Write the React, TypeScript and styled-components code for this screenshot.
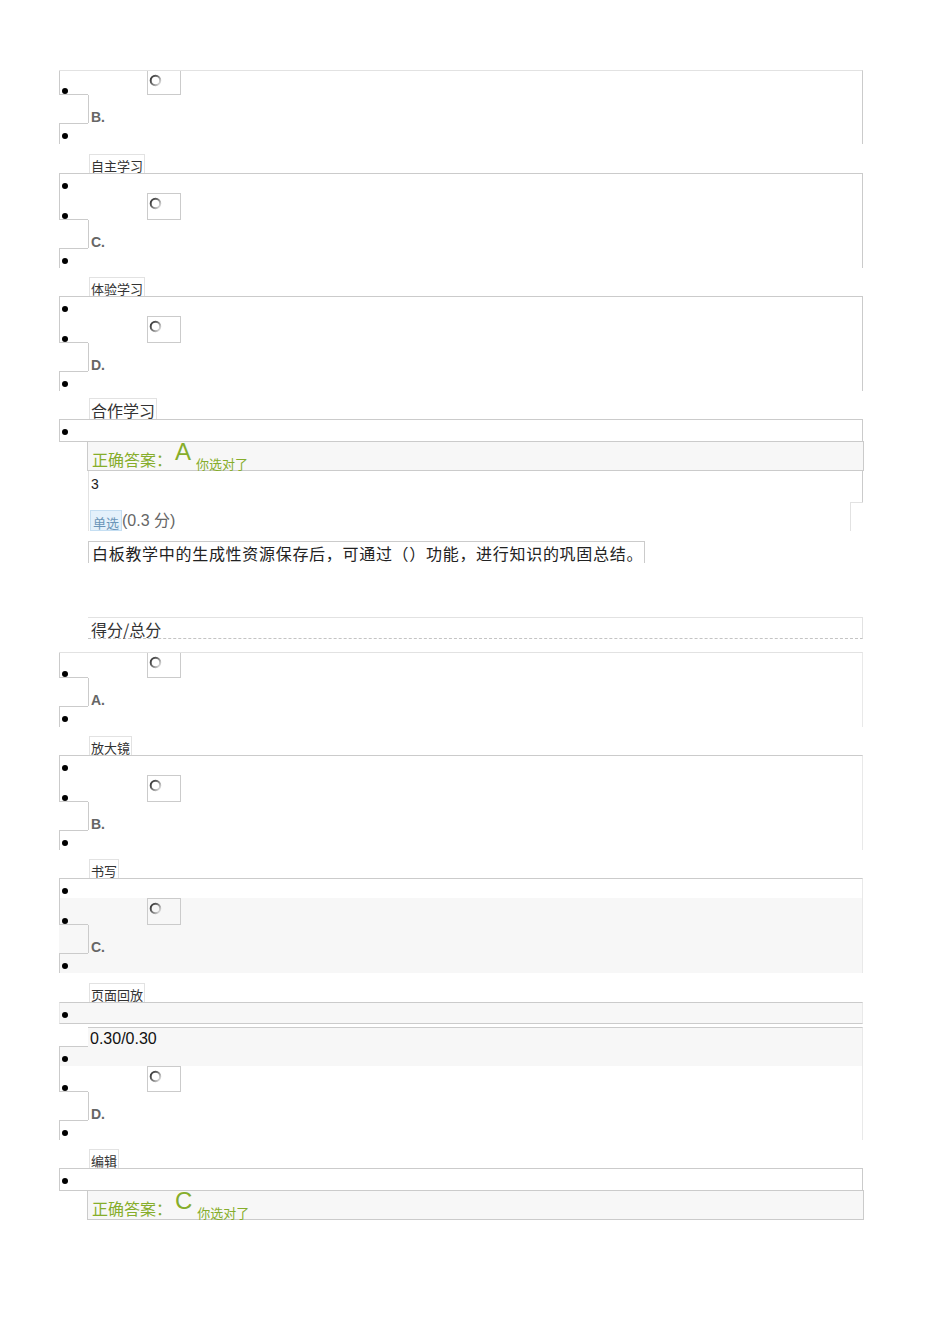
import React, { useId } from 'react';
import styled, { createGlobalStyle } from 'styled-components';

const LINE = '#cbcbcb';
const LIGHT = '#e2e2e2';
const FAINT = '#e9e9e9';
const GRAY = '#f7f7f7';
const GREEN = '#86ad2b';
const CJK = '"Noto Sans CJK SC", "Liberation Sans", sans-serif';
const LATIN = '"Liberation Sans", "Noto Sans CJK SC", sans-serif';

const GlobalStyle = createGlobalStyle`
  html, body { margin: 0; padding: 0; background: #fff; }
  body { font-family: ${LATIN}; color: #333; }
  * { box-sizing: border-box; }
`;

const Page = styled.div`
  width: 950px;
  min-height: 1344px;
  padding: 70px 0 0 59px;
`;

const Sheet = styled.div`
  width: 804px;
  display: flex;
  flex-direction: column;
`;

/* ---------- option block ---------- */

type TopLine = 'light' | 'dark' | 'notch';

const BlockWrap = styled.section<{ $top: TopLine; $side: string }>`
  display: flex;
  flex-direction: column;
  border-top: ${({ $top }) =>
    $top === 'notch' ? 'none' : `1px solid ${$top === 'light' ? LIGHT : LINE}`};
  border-right: 1px solid ${({ $side }) => $side};
`;

const Row = styled.div<{ $h: number; $gray?: boolean }>`
  display: flex;
  height: ${({ $h }) => $h}px;
  background: ${({ $gray }) => ($gray ? GRAY : 'transparent')};
`;

const Notch = styled.div<{ $lineTop?: boolean; $lineBottom?: boolean; $end?: boolean }>`
  width: 29px;
  height: 100%;
  display: flex;
  padding-left: 2px;
  align-items: ${({ $end }) => ($end ? 'flex-end' : 'flex-start')};
  border-left: 1px solid ${LINE};
  border-top: ${({ $lineTop }) => ($lineTop ? `1px solid ${LINE}` : 'none')};
  border-bottom: ${({ $lineBottom }) => ($lineBottom ? `1px solid ${LINE}` : 'none')};
`;

const Dot = styled.span<{ $mt?: number }>`
  display: block;
  width: 6px;
  height: 6px;
  border-radius: 50%;
  background: #000;
  margin-top: ${({ $mt }) => $mt ?? 0}px;
`;

const RadioBox = styled.div<{ $noTop?: boolean }>`
  margin-left: 59px;
  width: 34px;
  height: 100%;
  border: 1px solid ${LINE};
  border-top: ${({ $noTop }) => ($noTop ? 'none' : `1px solid ${LINE}`)};
  padding: 3px 0 0 1px;
  display: flex;
  align-items: flex-start;
`;

const LetterCell = styled.div`
  margin-left: 29px;
  height: 100%;
  border-left: 1px solid ${LINE};
  padding-left: 2px;
  display: flex;
  align-items: flex-end;
  font-family: ${LATIN};
  font-weight: 700;
  font-size: 14px;
  line-height: 14px;
  color: #666;
`;

const LetterText = styled.span`
  margin-bottom: -1px;
`;

function RadioIcon() {
  const id = useId().replace(/:/g, '');
  return (
    <svg width="13" height="13" viewBox="0 0 13 13">
      <defs>
        <linearGradient id={id} x1="0" y1="0.15" x2="1" y2="0.85">
          <stop offset="0" stopColor="#333" />
          <stop offset="0.5" stopColor="#7a7a7a" />
          <stop offset="1" stopColor="#e4e4e4" />
        </linearGradient>
      </defs>
      <circle cx="6.5" cy="6.5" r="4.8" fill="none" stroke={`url(#${id})`} strokeWidth="2" />
    </svg>
  );
}

type BlockProps = {
  letter: string;
  top: TopLine;
  side: string;
  upper?: boolean;
  upperGray?: boolean;
  radioH: number;
  bottomH: number;
  grayBody?: boolean;
};

function OptionBlock({ letter, top, side, upper, upperGray, radioH, bottomH, grayBody }: BlockProps) {
  const notchTop = top === 'notch';
  return (
    <BlockWrap $top={top} $side={side}>
      {upper && (
        <Row $h={notchTop ? 20 : 19} $gray={upperGray}>
          <Notch $lineTop={notchTop}>
            <Dot $mt={9} />
          </Notch>
        </Row>
      )}
      <Row $h={radioH} $gray={grayBody}>
        <Notch $lineBottom $end>
          <Dot />
        </Notch>
        <RadioBox $noTop={!upper}>
          <RadioIcon />
        </RadioBox>
      </Row>
      <Row $h={28} $gray={grayBody}>
        <LetterCell>
          <LetterText>{letter}</LetterText>
        </LetterCell>
      </Row>
      <Row $h={bottomH} $gray={grayBody}>
        <Notch $lineTop>
          <Dot $mt={9} />
        </Notch>
      </Row>
    </BlockWrap>
  );
}

/* ---------- option label ---------- */

const LabelGap = styled.div<{ $h: number }>`
  height: ${({ $h }) => $h}px;
  display: flex;
  align-items: flex-end;
`;

const LabelBox = styled.div<{ $big?: boolean }>`
  margin-left: 30px;
  height: ${({ $big }) => ($big ? 21 : 19)}px;
  padding: 0 1px;
  border: 1px solid ${LIGHT};
  border-bottom: none;
  display: flex;
  align-items: flex-end;
  font-family: ${CJK};
  font-size: ${({ $big }) => ($big ? 16 : 13)}px;
  line-height: ${({ $big }) => ($big ? 17 : 14)}px;
  color: #333;
`;

/* ---------- answer ---------- */

const AnswerLead = styled.div`
  height: 22px;
  border: 1px solid ${LINE};
  border-bottom: none;
  padding-left: 2px;
`;

const AnswerRow = styled.div`
  display: flex;
  margin-right: -1px;
`;

const AnswerStub = styled.div`
  width: 28px;
  border-top: 1px solid ${LINE};
`;

const AnswerBox = styled.div`
  flex: 1;
  height: 30px;
  border: 1px solid ${LINE};
  background: ${GRAY};
  padding-left: 4px;
  display: flex;
  align-items: flex-start;
  color: ${GREEN};
`;

const AnswerLabel = styled.span`
  font-family: ${CJK};
  font-size: 16px;
  line-height: 16px;
  margin-top: 9px;
`;

const AnswerLetter = styled.span`
  font-family: ${LATIN};
  font-size: 24px;
  line-height: 24px;
  margin: -2px 0 0 3px;
`;

const AnswerNote = styled.span`
  font-family: ${CJK};
  font-size: 13px;
  line-height: 13px;
  margin: 15px 0 0 5px;
`;

function Answer({ letter }: { letter: string }) {
  return (
    <>
      <AnswerLead>
        <Dot $mt={9} />
      </AnswerLead>
      <AnswerRow>
        <AnswerStub />
        <AnswerBox>
          <AnswerLabel>正确答案：</AnswerLabel>
          <AnswerLetter>{letter}</AnswerLetter>
          <AnswerNote>你选对了</AnswerNote>
        </AnswerBox>
      </AnswerRow>
    </>
  );
}

/* ---------- question meta ---------- */

const Meta = styled.div`
  margin-left: 29px;
  display: flex;
  flex-direction: column;
`;

const MetaTop = styled.div`
  height: 31px;
  border-left: 1px solid ${LIGHT};
  border-right: 1px solid ${LINE};
  padding: 5px 0 0 2px;
  font-family: ${LATIN};
  font-size: 14px;
  line-height: 16px;
  color: #222;
`;

const MetaBottom = styled.div`
  height: 29px;
  border-left: 1px solid ${LIGHT};
  display: flex;
  align-items: flex-end;
  padding-left: 1px;
`;

const TypeTag = styled.span`
  height: 21px;
  padding: 0 2px;
  background: #e4f1fb;
  border: 1px solid #c4def2;
  font-family: ${CJK};
  font-size: 13px;
  line-height: 24px;
  color: #6b95b8;
  overflow: hidden;
`;

const Points = styled.span`
  font-family: ${LATIN};
  font-size: 16px;
  line-height: 18px;
  color: #666;
  margin-bottom: 1px;
`;

const MetaStep = styled.div`
  margin-left: auto;
  width: 13px;
  height: 100%;
  border-left: 1px solid ${LIGHT};
  border-top: 1px solid ${LIGHT};
`;

const QuestionBox = styled.div`
  margin: 10px 0 0 29px;
  width: 557px;
  height: 22px;
  border: 1px solid ${LINE};
  border-bottom: none;
  padding: 2px 0 0 3px;
  font-family: ${CJK};
  font-size: 16px;
  line-height: 18px;
  letter-spacing: 0.7px;
  color: #222;
  white-space: nowrap;
`;

const ScoreHeader = styled.div`
  margin: 54px 0 13px 29px;
  height: 22px;
  border-top: 1px solid ${LIGHT};
  border-right: 1px solid ${LIGHT};
  border-bottom: 1px dashed #c4c4c4;
  padding: 2px 0 0 3px;
  font-family: ${CJK};
  font-size: 16px;
  line-height: 18px;
  color: #333;
`;

const Strip = styled.div`
  height: 22px;
  border-top: 1px solid ${LINE};
  border-bottom: 1px solid ${LINE};
  border-left: 1px solid ${FAINT};
  border-right: 1px solid ${FAINT};
  background: ${GRAY};
  padding-left: 2px;
`;

const ScoreBox = styled.div`
  margin: 3px 0 0 29px;
  height: 19px;
  border-top: 1px solid ${LINE};
  border-right: 1px solid ${FAINT};
  background: ${GRAY};
  padding: 2px 0 0 2px;
  font-family: ${LATIN};
  font-size: 16px;
  line-height: 18px;
  color: #111;
`;

export default function App() {
  return (
    <>
      <GlobalStyle />
      <Page>
        <Sheet>
          <OptionBlock letter="B." top="light" side={LINE} radioH={24} bottomH={21} />
          <LabelGap $h={29}>
            <LabelBox>自主学习</LabelBox>
          </LabelGap>
          <OptionBlock letter="C." top="dark" side={LINE} upper radioH={27} bottomH={20} />
          <LabelGap $h={28}>
            <LabelBox>体验学习</LabelBox>
          </LabelGap>
          <OptionBlock letter="D." top="dark" side={LINE} upper radioH={27} bottomH={20} />
          <LabelGap $h={28}>
            <LabelBox $big>合作学习</LabelBox>
          </LabelGap>
          <Answer letter="A" />

          <Meta>
            <MetaTop>3</MetaTop>
            <MetaBottom>
              <TypeTag>单选</TypeTag>
              <Points>(0.3 分)</Points>
              <MetaStep />
            </MetaBottom>
          </Meta>
          <QuestionBox>白板教学中的生成性资源保存后，可通过（）功能，进行知识的巩固总结。</QuestionBox>
          <ScoreHeader>得分/总分</ScoreHeader>

          <OptionBlock letter="A." top="light" side={FAINT} radioH={25} bottomH={21} />
          <LabelGap $h={28}>
            <LabelBox>放大镜</LabelBox>
          </LabelGap>
          <OptionBlock letter="B." top="dark" side={FAINT} upper radioH={27} bottomH={20} />
          <LabelGap $h={28}>
            <LabelBox>书写</LabelBox>
          </LabelGap>
          <OptionBlock letter="C." top="dark" side={FAINT} upper radioH={27} bottomH={20} grayBody />
          <LabelGap $h={29}>
            <LabelBox>页面回放</LabelBox>
          </LabelGap>
          <Strip>
            <Dot $mt={9} />
          </Strip>
          <ScoreBox>0.30/0.30</ScoreBox>
          <OptionBlock letter="D." top="notch" side={FAINT} upper upperGray radioH={26} bottomH={20} />
          <LabelGap $h={28}>
            <LabelBox>编辑</LabelBox>
          </LabelGap>
          <Answer letter="C" />
        </Sheet>
      </Page>
    </>
  );
}
